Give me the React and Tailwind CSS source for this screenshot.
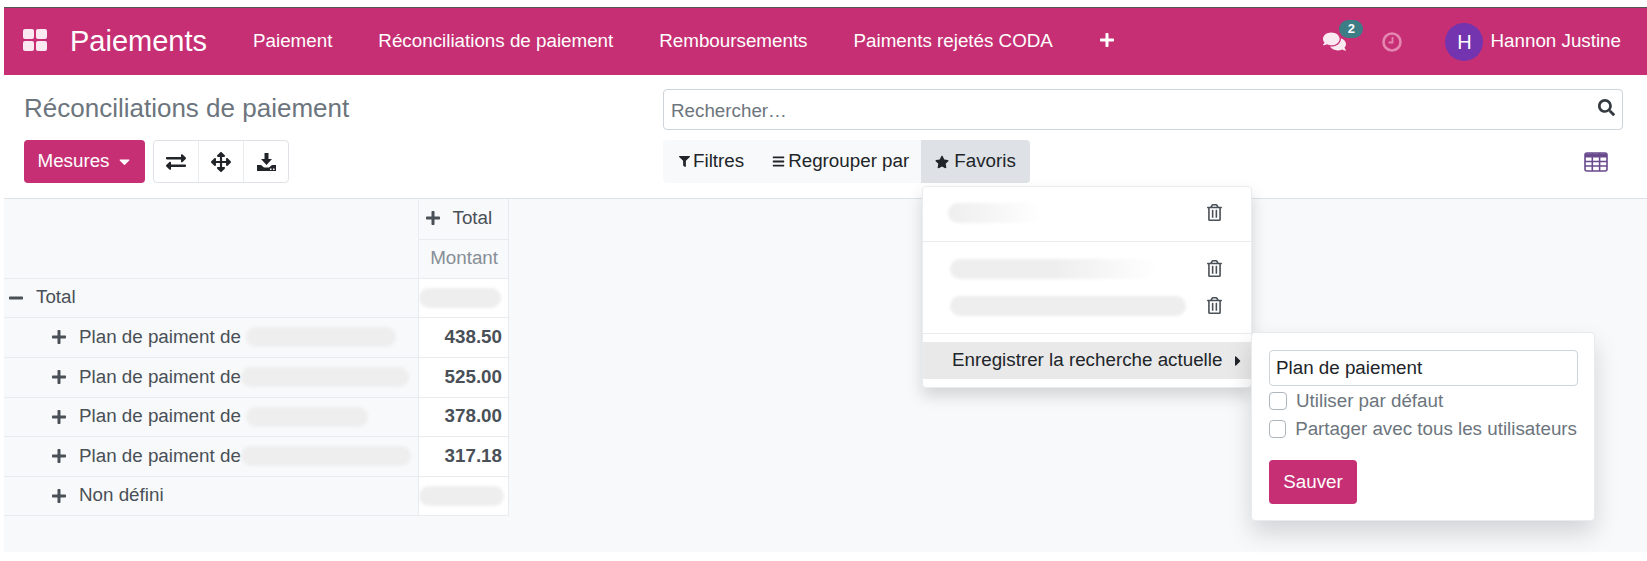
import React from 'react'
import { FaArrowsAlt, FaBars, FaCaretDown, FaCaretRight, FaComments, FaExchangeAlt, FaFilter, FaMinus, FaPlus, FaRegTrashAlt, FaSearch, FaStar } from 'react-icons/fa'

const rows = [
    { label: 'Plan de paiment de', amount: '438.50', blob: 'w-[150px] ml-[5px]', height: 'h-[40px]' },
    { label: 'Plan de paiment de', amount: '525.00', blob: 'w-[168px]', height: 'h-[40px]' },
    { label: 'Plan de paiment de', amount: '378.00', blob: 'w-[122px] ml-[5px]', height: 'h-[39px]' },
    { label: 'Plan de paiment de', amount: '317.18', blob: 'w-[170px]', height: 'h-[40px]' },
]

const Blob = ({ className }) => <span className={`block h-[20px] rounded-full blur-[1.5px] ${className}`} />

const Header = () => (
    <nav className="flex h-[68px] items-center border-t border-[#555] bg-[#c62f74] text-white">
        <div className="-mt-[4px] ml-[19px] grid w-[24px] grid-cols-2 gap-[2px]">
            <span className="h-[10px] rounded-[2px] bg-[#fbe9f1]" />
            <span className="h-[10px] rounded-[2px] bg-[#fbe9f1]" />
            <span className="h-[10px] rounded-[2px] bg-[#fbe9f1]" />
            <span className="h-[10px] rounded-[2px] bg-[#fbe9f1]" />
        </div>
        <span className="ml-[23px] text-[29px]">Paiements</span>
        <div className="ml-[46px] flex items-center gap-[46px] text-[18.8px]">
            <span>Paiement</span>
            <span>Réconciliations de paiement</span>
            <span>Remboursements</span>
            <span>Paiments rejetés CODA</span>
            <FaPlus className="-mt-[3px] size-[16px]" />
        </div>
        <div className="ml-auto flex items-center pr-[26px]">
            <div className="relative">
                <FaComments className="size-[23px] text-[#fbe9f1]" />
                <span className="absolute -top-[10px] left-[16px] flex h-[18px] w-[24px] items-center justify-center rounded-full bg-[#3d7d85] text-[13px] font-bold">2</span>
            </div>
            <svg width="20" height="20" viewBox="0 0 20 20" fill="none" stroke="#e486b0" className="ml-[36px]">
                <circle cx="10" cy="10" r="8.5" strokeWidth="2.6" />
                <path d="M10.5 5v5.5H6.5" strokeWidth="1.8" />
            </svg>
            <span className="ml-[43px] flex size-[38px] items-center justify-center rounded-full bg-[#7434b0] text-[20px]">H</span>
            <span className="ml-[7px] text-[18.8px]">Hannon Justine</span>
        </div>
    </nav>
)

const ControlPanel = () => (
    <div className="relative flex h-[124px] border-b border-[#dee2e6] bg-white">
        <div className="w-[659px] pl-[20px] pt-[17px]">
            <h1 className="text-[26px] leading-[32px] text-[#6c757d]">Réconciliations de paiement</h1>
            <div className="mt-[16px] flex">
                <button className="flex h-[43px] w-[121px] items-center justify-center gap-[6px] rounded-[4px] bg-[#c62f74] pl-[1px] text-[18.8px] text-white">
                    Mesures
                    <FaCaretDown className="size-[17px]" />
                </button>
                <div className="ml-[8px] flex h-[43px] rounded-[4px] border border-[#dee2e6] text-[#212529]">
                    <span className="flex w-[45px] items-center justify-center border-r border-[#e9ecef]"><FaExchangeAlt className="size-[20px]" /></span>
                    <span className="flex w-[45px] items-center justify-center border-r border-[#e9ecef]"><FaArrowsAlt className="size-[20px]" /></span>
                    <span className="flex w-[44px] items-center justify-center">
                        <svg width="19" height="18" viewBox="0 0 19 18" fill="currentColor">
                            <path d="M7.5 0h4v6h3.5l-5.500 6-5.500-6h3.500z" />
                            <path d="M0 12h4l3 2.500h5l3-2.500h4v6H0z" />
                            <path d="M13 15.500h1.500V17H13zM16 15.500h1.500V17H16z" fill="#fff" />
                        </svg>
                    </span>
                </div>
            </div>
        </div>
        <div className="flex-1 pr-[24px] pt-[14px]">
            <div className="flex h-[41px] items-center justify-between rounded-[4px] border border-[#ced4da] pl-[7px] pr-[7px]">
                <span className="mt-[3px] text-[18.8px] text-[#6c757d]">Rechercher…</span>
                <FaSearch className="-mt-[4px] size-[17px] text-[#343a40]" />
            </div>
            <div className="mt-[10px] flex items-center justify-between">
                <div className="flex h-[43px] items-center rounded-[4px] bg-[#f8f9fa] text-[18.8px] text-[#212529]">
                    <span className="flex items-center gap-[3px] pl-[16px] pr-[28px]"><FaFilter className="size-[11px]" />Filtres</span>
                    <span className="flex items-center gap-[3px] pr-[12px]"><FaBars className="size-[13px]" />Regrouper par</span>
                    <span className="flex h-[43px] items-center gap-[5px] rounded-r-[4px] bg-[#dee2e6] px-[14px]"><FaStar className="size-[14px]" />Favoris</span>
                </div>
                <svg width="24" height="20" viewBox="0 0 24 20" fill="none" stroke="#6a4a8f" strokeWidth="1.6" className="mr-[15px]">
                    <rect x="1" y="1" width="22" height="18" rx="2" />
                    <path d="M1 3.500h22" strokeWidth="4" />
                    <path d="M1 9.500h22M1 14h22M8.300 1v18M15.600 1v18" />
                </svg>
            </div>
        </div>
        <FavoriteMenu />
        <SaveMenu />
    </div>
)

const FavoriteMenu = () => (
    <div className="absolute left-[918px] top-[111px] z-10 h-[202px] w-[330px] rounded-[4px] border border-[#e9ecef] bg-white text-[18.8px] text-[#212529] shadow-[0_8px_16px_rgba(0,0,0,0.15)]">
        <div className="flex h-[54px] items-center justify-between pb-[3px] pl-[25px] pr-[28px]">
            <Blob className="w-[95px] bg-gradient-to-r from-[#eeeeee] to-white" />
            <FaRegTrashAlt className="size-[17px] text-[#495057]" />
        </div>
        <div className="border-t border-[#e9ecef] pt-[8px]">
            <div className="flex h-[37px] items-center justify-between pl-[27px] pr-[28px]">
                <Blob className="w-[208px] bg-gradient-to-r from-[#eeeeee] via-[#eeeeee] to-white" />
                <FaRegTrashAlt className="size-[17px] text-[#495057]" />
            </div>
            <div className="flex h-[37px] items-center justify-between pl-[27px] pr-[28px]">
                <Blob className="w-[236px] bg-[#eeeeee]" />
                <FaRegTrashAlt className="size-[17px] text-[#495057]" />
            </div>
        </div>
        <div className="mt-[9px] border-t border-[#e9ecef] pt-[8px]">
            <div className="flex h-[37px] items-center justify-between bg-[#e9e9e9] pl-[29px] pr-[5px]">
                <span>Enregistrer la recherche actuelle</span>
                <FaCaretRight className="size-[16px]" />
            </div>
        </div>
    </div>
)

const SaveMenu = () => (
    <div className="absolute left-[1247px] top-[257px] z-20 h-[189px] w-[344px] rounded-[4px] border border-[#e9ecef] bg-white px-[17px] pt-[17px] text-[18.8px] shadow-[0_12px_24px_rgba(0,0,0,0.15)]">
        <div className="flex h-[36px] w-[309px] items-center rounded-[4px] border border-[#ced4da] px-[6px] text-[#212529]">Plan de paiement</div>
        <label className="mt-[5px] flex h-[20px] items-center gap-[9px] text-[#6c757d]">
            <span className="size-[18px] rounded-[4px] border border-[#adb5bd] bg-white" />
            Utiliser par défaut
        </label>
        <label className="mt-[8px] flex h-[20px] items-center gap-[9px] whitespace-nowrap text-[#6c757d]">
            <span className="size-[18px] rounded-[4px] border border-[#adb5bd] bg-white" />
            Partager avec tous les utilisateurs
        </label>
        <button className="mt-[21px] h-[44px] w-[88px] rounded-[4px] bg-[#c62f74] text-white">Sauver</button>
    </div>
)

const PivotTable = () => (
    <table className="w-[505px] table-fixed border-collapse text-[18.8px] text-[#495057]">
        <tbody>
            <tr className="h-[40px]">
                <td className="w-[414px]" />
                <td className="border-x border-[#e9ecef] pb-[1px] pl-[6px]">
                    <span className="flex items-center gap-[12px]"><FaPlus className="size-[16px]" />Total</span>
                </td>
            </tr>
            <tr className="h-[39px] border-b border-[#e9ecef]">
                <td />
                <td className="border-x border-t border-[#e9ecef] pr-[10px] text-right text-[#868e96]">Montant</td>
            </tr>
            <tr className="h-[39px] border-b border-[#e9ecef]">
                <td className="pl-[4px]">
                    <span className="flex items-center gap-[12px]"><FaMinus className="size-[16px]" />Total</span>
                </td>
                <td className="border-x border-[#e9ecef] bg-white"><Blob className="w-[82px] bg-[#eeeeee]" /></td>
            </tr>
            {rows.map((row, i) => (
                <tr key={i} className={`${row.height} border-b border-[#e9ecef]`}>
                    <td className="pl-[47px]">
                        <span className="flex items-center">
                            <FaPlus className="mr-[12px] size-[16px]" />
                            {row.label}
                            <Blob className={`bg-[#eeeeee] ${row.blob}`} />
                        </span>
                    </td>
                    <td className="border-x border-[#e9ecef] bg-white pr-[6px] text-right font-bold">{row.amount}</td>
                </tr>
            ))}
            <tr className="h-[39px] border-b border-[#e9ecef]">
                <td className="pl-[47px]">
                    <span className="flex items-center"><FaPlus className="mr-[12px] size-[16px]" />Non défini</span>
                </td>
                <td className="border-x border-[#e9ecef] bg-white"><Blob className="w-[85px] bg-[#eeeeee]" /></td>
            </tr>
        </tbody>
    </table>
)

const App = () => {
    return (
        <div className="h-[561px] overflow-hidden bg-white pl-[4px] pt-[7px] font-['Liberation_Sans',Arial,sans-serif]">
            <Header />
            <ControlPanel />
            <div className="h-[353px] bg-[#f8f9fa]">
                <PivotTable />
            </div>
        </div>
    )
}

export default App
